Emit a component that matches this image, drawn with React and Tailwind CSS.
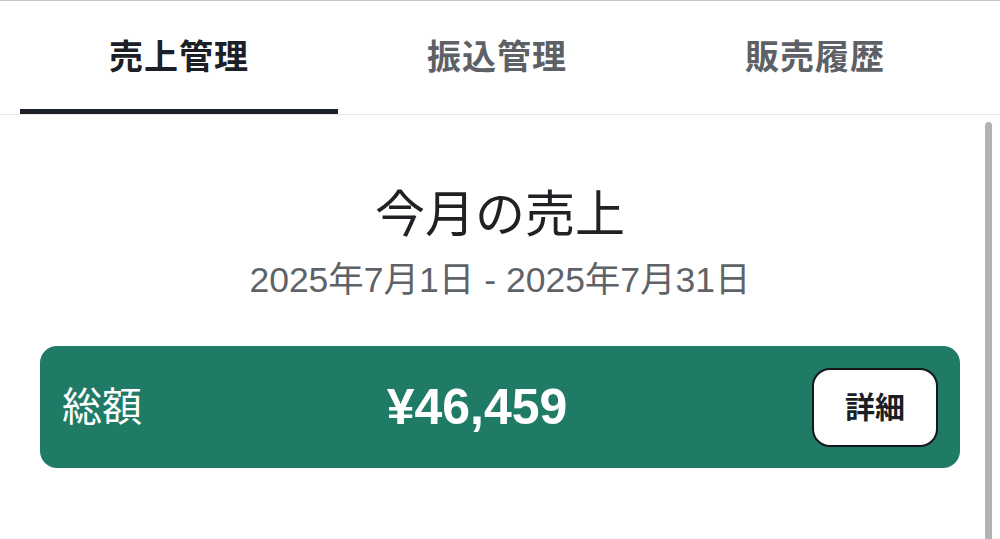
import React from 'react';

const font = { fontFamily: '"Liberation Sans", "Noto Sans CJK JP", sans-serif' };

const tabs = ['売上管理', '振込管理', '販売履歴'];

function Tab({ label, active }) {
  return (
    <div
      className={`flex-1 flex items-center justify-center text-[34px] font-bold tracking-[1px] ${
        active ? 'text-[#1b2026] border-b-[5px] border-[#1b2026] pt-[5px]' : 'text-[#5d6166]'
      }`}
    >
      {label}
    </div>
  );
}

export default function App() {
  return (
    <div className="relative w-[1000px] h-[539px] overflow-hidden bg-white" style={font}>
      <div className="h-px bg-[#c6c6c6]" />
      <div className="flex h-[114px] pl-[20px] pr-[26px] border-b border-[#e6e6e6]">
        {tabs.map((t, i) => (
          <Tab key={t} label={t} active={i === 0} />
        ))}
      </div>

      <div className="flex flex-col items-center px-[40px]">
        <h1 className="mt-[70px] text-[50px] leading-[60px] text-[#202124]">今月の売上</h1>
        <p className="mt-[13px] text-[35.5px] leading-[44px] text-[#5f6368]">2025年7月1日 - 2025年7月31日</p>

        <div className="mt-[44px] w-full h-[122px] rounded-[17px] bg-[#1f7a66] flex items-center pl-[22px] pr-[22px]">
          <span className="text-[40px] text-white">総額</span>
          <span className="flex-1 text-center text-[50px] font-bold text-white">¥46,459</span>
          <button className="w-[126px] h-[79px] rounded-[18px] bg-white border-[2.5px] border-[#14181c] text-[30px] font-bold text-[#1b1f23]">
            詳細
          </button>
        </div>
      </div>

      <div className="absolute left-[985px] top-[122px] w-[7px] h-[430px] rounded-t-full bg-[#b3b3b3]" />
    </div>
  );
}
